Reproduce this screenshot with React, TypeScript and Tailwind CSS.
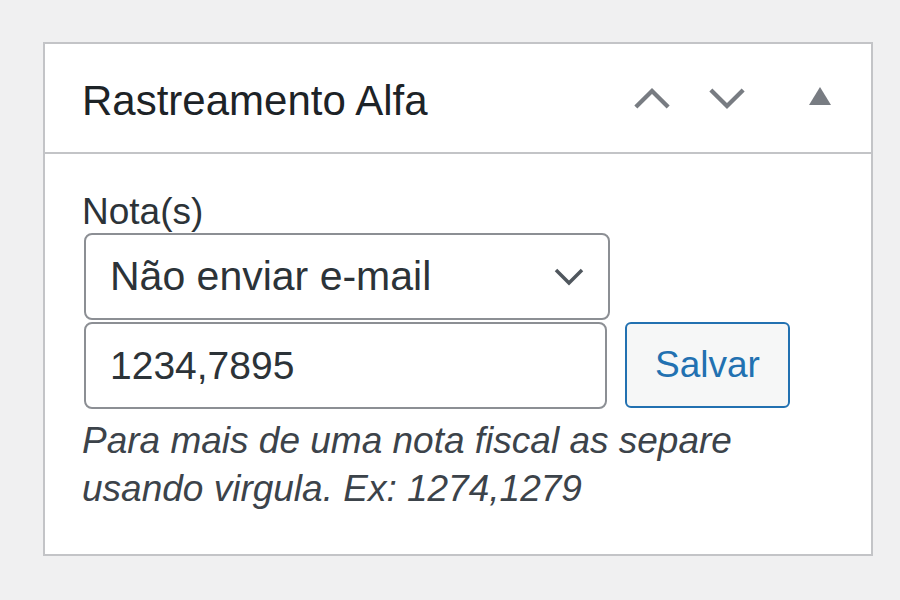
import { useState } from "react";

const Chevron = ({ up, className }: { up?: boolean; className?: string }) => (
  <svg viewBox="0 0 40 24" className={className} fill="none" stroke="currentColor" strokeWidth="4.5">
    {up ? <path d="M3 21 L20 4 L37 21" /> : <path d="M3 3 L20 20 L37 3" />}
  </svg>
);

const App = () => {
  const [nota, setNota] = useState("1234,7895");

  return (
    <div
      className="w-[900px] h-[600px] bg-[#f0f0f1] pt-[42px] pl-[43px]"
      style={{ fontFamily: '"Liberation Sans", Arial, sans-serif' }}
    >
      <div className="w-[830px] h-[514px] bg-white border-2 border-[#c3c4c7]">
        <div className="h-[110px] border-b-2 border-[#c3c4c7] flex items-center pl-[37px] pr-[40px]">
          <h2 className="text-[42px] leading-none text-[#1d2327] flex-1 pt-[6px]">Rastreamento Alfa</h2>
          <div className="flex items-center text-[#787c82]">
            <Chevron up className="w-[38px] h-[23px] -ml-[3px]" />
            <Chevron className="w-[38px] h-[23px] ml-[37px]" />
            <svg viewBox="0 0 22 18" className="w-[22px] h-[18px] ml-[63px] mb-[4px]" fill="currentColor">
              <path d="M11 0 L22 18 L0 18 Z" />
            </svg>
          </div>
        </div>
        <div className="pl-[37px] pt-[36px]">
          <label className="block text-[37px] leading-[43px] text-[#2c3338]">Nota(s)</label>
          <div className="ml-[2px] w-[526px] h-[87px] border-2 border-[#8c8f94] rounded-[8px] flex items-center pl-[24px] pr-[24px]">
            <span className="flex-1 text-[41px] text-[#2c3338]">Não enviar e-mail</span>
            <svg viewBox="0 0 30 18" className="w-[30px] h-[18px] text-[#50575e]" fill="none" stroke="currentColor" strokeWidth="3.5">
              <path d="M2 2 L15 15 L28 2" />
            </svg>
          </div>
          <div className="flex mt-[2px]">
            <input
              value={nota}
              onChange={(e) => setNota(e.target.value)}
              className="ml-[2px] w-[523px] h-[87px] border-2 border-[#8c8f94] rounded-[8px] pl-[24px] text-[39px] text-[#2c3338] outline-none"
            />
            <button className="ml-[18px] w-[165px] h-[86px] border-2 border-[#2271b1] rounded-[6px] bg-[#f6f7f7] text-[#2271b1] text-[37px]">
              Salvar
            </button>
          </div>
          <p className="mt-[8px] italic text-[37px] leading-[48px] text-[#3c434a]">
            Para mais de uma nota fiscal as separe
            <br />
            usando virgula. Ex: 1274,1279
          </p>
        </div>
      </div>
    </div>
  );
};

export default App;
